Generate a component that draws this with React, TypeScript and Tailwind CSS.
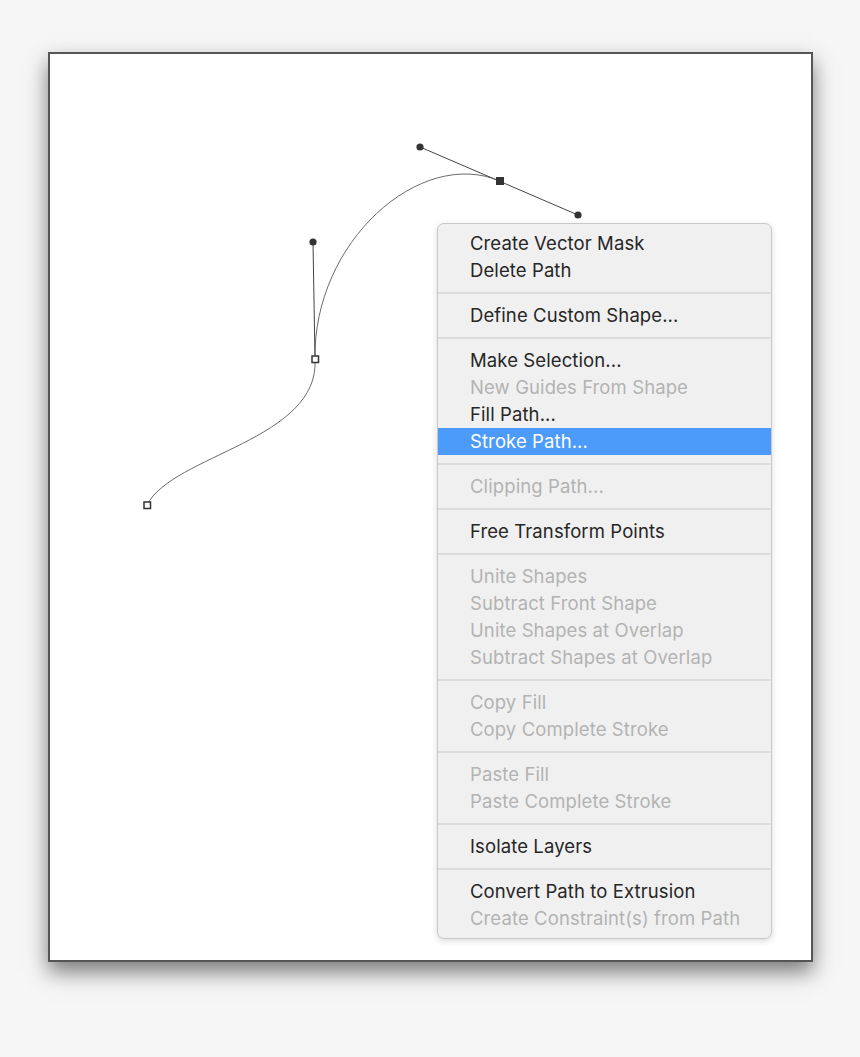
import React from "react";

type Item = { label: string; disabled?: boolean; active?: boolean };

const groups: Item[][] = [
  [{ label: "Create Vector Mask" }, { label: "Delete Path" }],
  [{ label: "Define Custom Shape..." }],
  [
    { label: "Make Selection..." },
    { label: "New Guides From Shape", disabled: true },
    { label: "Fill Path..." },
    { label: "Stroke Path...", active: true },
  ],
  [{ label: "Clipping Path...", disabled: true }],
  [{ label: "Free Transform Points" }],
  [
    { label: "Unite Shapes", disabled: true },
    { label: "Subtract Front Shape", disabled: true },
    { label: "Unite Shapes at Overlap", disabled: true },
    { label: "Subtract Shapes at Overlap", disabled: true },
  ],
  [
    { label: "Copy Fill", disabled: true },
    { label: "Copy Complete Stroke", disabled: true },
  ],
  [
    { label: "Paste Fill", disabled: true },
    { label: "Paste Complete Stroke", disabled: true },
  ],
  [{ label: "Isolate Layers" }],
  [
    { label: "Convert Path to Extrusion" },
    { label: "Create Constraint(s) from Path", disabled: true },
  ],
];

function PathDrawing() {
  const ox = 50;
  const oy = 54;
  const p = (x: number, y: number) => `${x - ox},${y - oy}`;
  return (
    <svg
      className="absolute left-0 top-0"
      width={761}
      height={906}
      viewBox="0 0 761 906"
    >
      <path
        d={`M${p(147, 505)} C${p(172, 455)} ${p(320, 440)} ${p(315, 359)} C${p(313, 242)} ${p(420, 147)} ${p(500, 181)}`}
        fill="none"
        stroke="#6b6b6b"
        strokeWidth={1}
      />
      <line x1={313 - ox} y1={242 - oy} x2={315 - ox} y2={359 - oy} stroke="#444" strokeWidth={1} />
      <line x1={420 - ox} y1={147 - oy} x2={578 - ox} y2={215 - oy} stroke="#444" strokeWidth={1} />
      <circle cx={313 - ox} cy={242 - oy} r={3.6} fill="#333" />
      <circle cx={420 - ox} cy={147 - oy} r={3.6} fill="#333" />
      <circle cx={578 - ox} cy={215 - oy} r={3.6} fill="#333" />
      <rect x={496 - ox} y={177 - oy} width={8} height={8} fill="#333" />
      <rect x={312 - ox} y={356 - oy} width={6.5} height={6.5} fill="#fff" stroke="#333" strokeWidth={1.5} />
      <rect x={144 - ox} y={502 - oy} width={6.5} height={6.5} fill="#fff" stroke="#333" strokeWidth={1.5} />
    </svg>
  );
}

function Menu() {
  return (
    <div className="absolute left-[387px] top-[169px] w-[335px] rounded-[7px] border border-[#c9c9c9] bg-[#f0f0f0] py-[6px] shadow-[0_2px_6px_rgba(0,0,0,0.15)] font-['Inter','Liberation_Sans',sans-serif] text-[18.5px] tracking-[0.1px]">
      {groups.map((g, gi) => (
        <React.Fragment key={gi}>
          {gi > 0 && (
            <div className="flex h-[18px] items-center">
              <div className="h-[2px] w-full bg-[#dcdcdc]" />
            </div>
          )}
          {g.map((it) => (
            <div
              key={it.label}
              className={
                "flex h-[27px] items-center pl-[32px] leading-none " +
                (it.active
                  ? "bg-[#4c9bfb] text-white"
                  : it.disabled
                  ? "text-[#b3b3b3]"
                  : "text-[#262626]")
              }
            >
              {it.label}
            </div>
          ))}
        </React.Fragment>
      ))}
    </div>
  );
}

export default function App() {
  return (
    <div className="min-h-[1057px] w-[860px] bg-[#f6f6f6] pl-[48px] pt-[52px]">
      <div className="relative h-[910px] w-[765px] border-2 border-[#555555] bg-white shadow-[0_10px_20px_rgba(0,0,0,0.5)]">
        <PathDrawing />
        <Menu />
      </div>
    </div>
  );
}
